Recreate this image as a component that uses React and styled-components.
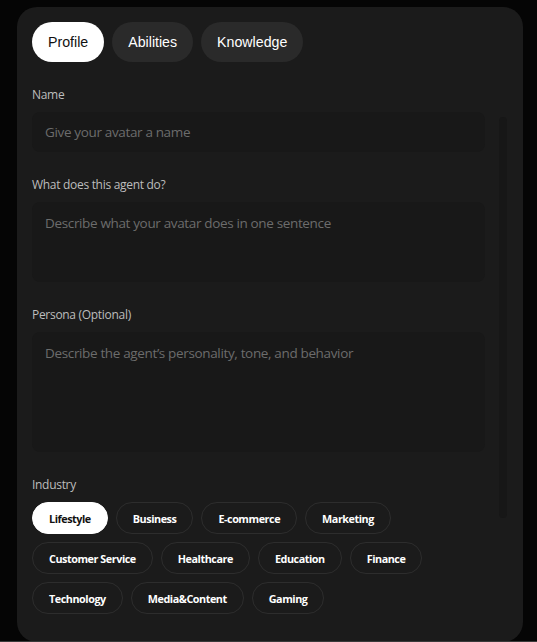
import React, { useState } from 'react';
import styled, { createGlobalStyle } from 'styled-components';

const GlobalStyle = createGlobalStyle`
  html, body {
    margin: 0;
    padding: 0;
    background: #050505;
  }
  * {
    box-sizing: border-box;
  }
`;

const Page = styled.div`
  height: 642px;
  padding: 7px 14px 0 17px;
  border-bottom: 1px solid #3a3a3a;
  overflow: hidden;
`;

const Card = styled.div`
  background: #1b1b1b;
  border-radius: 20px;
  padding: 15px 16px 28px 15px;
  display: flex;
  flex-direction: column;
  gap: 24px;
`;

const Tabs = styled.div`
  display: flex;
  gap: 8px;
`;

const Tab = styled.button`
  height: 40px;
  padding: 0 16px;
  border: none;
  border-radius: 20px;
  background: ${props => (props.active ? '#ffffff' : '#2a2a2a')};
  color: ${props => (props.active ? '#111111' : '#ffffff')};
  font-family: 'Liberation Sans', Arial, sans-serif;
  font-size: 14.2px;
  cursor: pointer;
`;

const Body = styled.div`
  display: grid;
  grid-template-columns: 1fr 8px;
  column-gap: 14px;
`;

const Form = styled.div`
  display: flex;
  flex-direction: column;
  gap: 24px;
`;

const Field = styled.div`
  display: flex;
  flex-direction: column;
  gap: ${props => props.gap || 8}px;
`;

const Label = styled.label`
  font-family: 'Open Sans', 'Noto Sans', sans-serif;
  font-size: 12px;
  letter-spacing: -0.3px;
  line-height: 18px;
  color: #bdbdbd;
`;

const fieldText = `
  width: 100%;
  border: none;
  outline: none;
  border-radius: 8px;
  background: #181818;
  color: #e0e0e0;
  font-family: 'Open Sans', 'Noto Sans', sans-serif;
  font-size: 13.5px;
  letter-spacing: -0.35px;
  padding: 0 13px;
  &::placeholder {
    color: #6c6c6c;
  }
`;

const Input = styled.input`
  ${fieldText}
  height: 40px;
`;

const TextArea = styled.textarea`
  ${fieldText}
  height: ${props => props.h}px;
  padding-top: 11px;
  line-height: 20px;
  resize: none;
`;

const Chips = styled.div`
  display: flex;
  flex-wrap: wrap;
  gap: 8px;
`;

const Chip = styled.button`
  height: 32px;
  padding: 0 16px;
  border-radius: 16px;
  border: 1px solid ${props => (props.selected ? '#ffffff' : '#2d2d2d')};
  background: ${props => (props.selected ? '#ffffff' : 'transparent')};
  color: ${props => (props.selected ? '#111111' : '#ffffff')};
  font-family: 'Open Sans', 'Noto Sans', sans-serif;
  font-weight: 700;
  font-size: 10.8px;
  letter-spacing: -0.45px;
  cursor: pointer;
`;

const ScrollTrack = styled.div`
  display: flex;
  flex-direction: column;
`;

const ScrollThumb = styled.div`
  margin-top: 31px;
  height: 401px;
  border-radius: 4px;
  background: #171717;
`;

const tabs = ['Profile', 'Abilities', 'Knowledge'];

const industries = [
  'Lifestyle', 'Business', 'E-commerce', 'Marketing',
  'Customer Service', 'Healthcare', 'Education', 'Finance',
  'Technology', 'Media&Content', 'Gaming',
];

const App = () => {
  const [tab, setTab] = useState('Profile');
  const [industry, setIndustry] = useState('Lifestyle');

  return (
    <Page>
      <GlobalStyle />
      <Card>
        <Tabs>
          {tabs.map(t => (
            <Tab key={t} active={t === tab} onClick={() => setTab(t)}>{t}</Tab>
          ))}
        </Tabs>

        <Body>
          <Form>
            <Field>
              <Label>Name</Label>
              <Input placeholder="Give your avatar a name" />
            </Field>
            <Field>
              <Label>What does this agent do?</Label>
              <TextArea h={80} placeholder="Describe what your avatar does in one sentence" />
            </Field>
            <Field>
              <Label>Persona (Optional)</Label>
              <TextArea h={120} placeholder="Describe the agent’s personality, tone, and behavior" />
            </Field>
            <Field gap={8}>
              <Label>Industry</Label>
              <Chips>
                {industries.map(i => (
                  <Chip key={i} selected={i === industry} onClick={() => setIndustry(i)}>{i}</Chip>
                ))}
              </Chips>
            </Field>
          </Form>
          <ScrollTrack>
            <ScrollThumb />
          </ScrollTrack>
        </Body>
      </Card>
    </Page>
  );
};

export default App;
